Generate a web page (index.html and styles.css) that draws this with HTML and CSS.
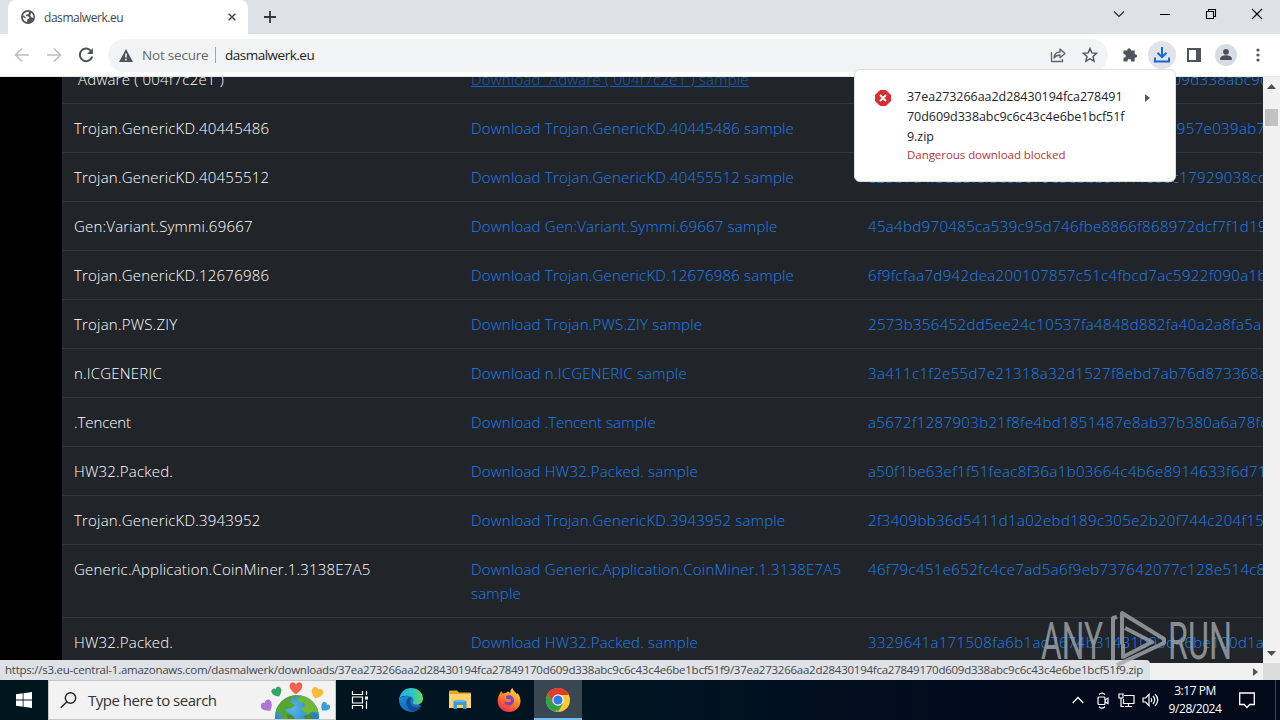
FILE: index.html
```html
<!DOCTYPE html>
<html lang="en">
<head>
<meta charset="utf-8">
<title>dasmalwerk.eu</title>
<link rel="stylesheet" href="styles.css">
</head>
<body>
<div class="screen">
  <header class="tabstrip">
    <div class="tab">
      <svg class="globe" width="14" height="14" viewBox="0 0 14 14"><circle cx="7" cy="7" r="7" fill="#505357"/><path d="M2 5.2C3 3 4.700 1.700 7.400 1.700L8.200 3 7 4.300 5.300 4.600 5 6 7.600 6.400 8.500 7.800 7.400 9 6.300 9.100 6.100 11.800 5.300 12C3 11 1.700 9 2 7L4.500 8.500 4.900 7.400ZM10 2.700C12 4 12.800 6 12.300 8L10.500 7.300 9.300 5.700Z" fill="#fff"/></svg>
      <span class="tab-title">dasmalwerk.eu</span>
      <svg class="tab-x" width="8" height="8" viewBox="0 0 8 8"><path d="M.7.7l6.600 6.600M7.300.7L.7 7.300" stroke="#45484c" stroke-width="1.500"/></svg>
    </div>
    <svg class="newtab" width="12" height="12" viewBox="0 0 12 12"><path d="M6 0v12M0 6h12" stroke="#35373b" stroke-width="1.800"/></svg>
    <div class="winbtns">
      <svg width="12" height="12" viewBox="0 0 12 12"><path d="M1 3.500l5 5 5-5" fill="none" stroke="#222" stroke-width="1.100"/></svg>
      <svg width="12" height="12" viewBox="0 0 12 12"><path d="M1 6.500h10" stroke="#000"/></svg>
      <svg width="12" height="12" viewBox="0 0 12 12"><path d="M1.500 3.500h7v7h-7zM3.500 3.500v-2h7v7h-2" fill="none" stroke="#000" stroke-width="1.100"/></svg>
      <svg width="12" height="12" viewBox="0 0 12 12"><path d="M1 1l10 10M11 1L1 11" stroke="#000" stroke-width="1.100"/></svg>
    </div>
  </header>
  <div class="toolbar">
    <div class="nav">
      <svg width="16" height="16" viewBox="0 0 16 16"><path d="M15 8H2M8 1.500L1.500 8 8 14.500" fill="none" stroke="#bcbec1" stroke-width="1.600"/></svg>
      <svg width="16" height="16" viewBox="0 0 16 16"><path d="M1 8h13M8 1.500L14.500 8 8 14.500" fill="none" stroke="#bcbec1" stroke-width="1.600"/></svg>
      <svg width="16" height="16" viewBox="0 0 16 16"><path d="M13.300 4.300A6.300 6.300 0 1 0 14.200 9.500" fill="none" stroke="#505357" stroke-width="2"/><path d="M14.900 1v6H9z" fill="#505357"/></svg>
    </div>
    <div class="omnibox">
      <svg width="14" height="13" viewBox="0 0 14 13"><path d="M7 0l7 13H0z" fill="#505357"/><path d="M7 4.500v4M7 9.800v1.600" stroke="#fff" stroke-width="1.500"/></svg>
      <span class="notsecure">Not secure</span><i class="sep"></i><span class="url">dasmalwerk.eu</span>
      <svg class="share" width="16" height="16" viewBox="0 0 16 16"><path d="M1.500 5v9.500h11v-2.500M4 11c.3-4 2.500-6 6-6V2l5 4.500-5 4.300V8C7.500 8 5.500 9 4 11z" fill="none" stroke="#606367" stroke-width="1.300" stroke-linejoin="round"/></svg>
      <svg width="16" height="16" viewBox="0 0 16 16"><path d="M8 1.500l1.900 4.400 4.700.4L11 9.500l1.100 4.700L8 11.700l-4.100 2.500L5 9.500 1.400 6.300l4.700-.4z" fill="none" stroke="#505357" stroke-width="1.400"/></svg>
    </div>
    <div class="actions">
      <span class="act"><svg width="16" height="16" viewBox="0 0 16 16"><path d="M1.500 3.500H5.300V3a1.800 1.800 0 0 1 3.600 0v.5h3.800v3.700h.6a1.800 1.800 0 0 1 0 3.600h-.6v3.700H9.200V14a1.900 1.900 0 0 0-3.800 0v.5H1.500v-3.700H2a1.800 1.800 0 0 0 0-3.600h-.5z" fill="#505357"/></svg></span>
      <span class="act active"><svg width="16" height="16" viewBox="0 0 16 16"><path d="M8 0v10M3.500 5.700L8 10.200l4.500-4.500M1 10.500v4h14v-4" fill="none" stroke="#1967d2" stroke-width="2"/></svg></span>
      <span class="act"><svg width="14" height="14" viewBox="0 0 14 14"><path d="M1 1h12v12H1z" fill="#fff" stroke="#505357" stroke-width="2"/><path d="M9 1h4v12H9z" fill="#505357"/></svg></span>
      <span class="act avatar"><svg width="22" height="22" viewBox="0 0 22 22"><circle cx="11" cy="11" r="11" fill="#dadce5"/><circle cx="11" cy="7.800" r="2.900" fill="#4a4e58"/><path d="M5.200 16v-1.500c0-2 3.500-3.200 5.800-3.200s5.800 1.200 5.800 3.200V16z" fill="#4a4e58"/></svg></span>
      <span class="act"><svg width="4" height="14" viewBox="0 0 4 14"><g fill="#505357"><circle cx="2" cy="2" r="1.600"/><circle cx="2" cy="7" r="1.600"/><circle cx="2" cy="12" r="1.600"/></g></svg></span>
    </div>
  </div>

  <div class="viewport">
    <div class="page">
      <div class="rows">
        <div class="row"><span>&nbsp;Adware ( 004f7c2e1 )</span><a class="hover">Download &nbsp;Adware ( 004f7c2e1 ) sample</a><a class="hash">37ea273266aa2d28430194fca27849170d609d338abc9c6c43</a></div>
        <div class="row"><span>Trojan.GenericKD.40445486</span><a>Download Trojan.GenericKD.40445486 sample</a><a class="hash">7a0d4c8e51b26f93ad0e7c15b8d24f60a3e1957e039ab7</a></div>
        <div class="row"><span>Trojan.GenericKD.40455512</span><a>Download Trojan.GenericKD.40455512 sample</a><a class="hash">e25b7d4f3d25fef5c63679e5e3b39ff7f4e60c17929038cd</a></div>
        <div class="row"><span>Gen:Variant.Symmi.69667</span><a>Download Gen:Variant.Symmi.69667 sample</a><a class="hash">45a4bd970485ca539c95d746fbe8866f868972dcf7f1d19</a></div>
        <div class="row"><span>Trojan.GenericKD.12676986</span><a>Download Trojan.GenericKD.12676986 sample</a><a class="hash">6f9fcfaa7d942dea200107857c51c4fbcd7ac5922f090a1b</a></div>
        <div class="row"><span>Trojan.PWS.ZIY</span><a>Download Trojan.PWS.ZIY sample</a><a class="hash">2573b356452dd5ee24c10537fa4848d882fa40a2a8fa5a1</a></div>
        <div class="row"><span>n.ICGENERIC</span><a>Download n.ICGENERIC sample</a><a class="hash">3a411c1f2e55d7e21318a32d1527f8ebd7ab76d873368a</a></div>
        <div class="row"><span class="tight">.Tencent</span><a>Download <span class="tight">.Tencent</span> sample</a><a class="hash">a5672f1287903b21f8fe4bd1851487e8ab37b380a6a78fc</a></div>
        <div class="row"><span>HW32.Packed.</span><a>Download HW32.Packed. sample</a><a class="hash">a50f1be63ef1f51feac8f36a1b03664c4b6e8914633f6d71</a></div>
        <div class="row"><span>Trojan.GenericKD.3943952</span><a>Download Trojan.GenericKD.3943952 sample</a><a class="hash">2f3409bb36d5411d1a02ebd189c305e2b20f744c204f15</a></div>
        <div class="row"><span>Generic.Application.CoinMiner.1.3138E7A5</span><a>Download Generic.Application.CoinMiner.1.3138E7A5<br>sample</a><a class="hash">46f79c451e652fc4ce7ad5a6f9eb737642077c128e514c8</a></div>
        <div class="row"><span>HW32.Packed.</span><a>Download HW32.Packed. sample</a><a class="hash">3329641a171508fa6b1ad7674b31431093d46be100d1a</a></div>
      </div>
    </div>
    <div class="vscroll"><svg width="9" height="5" viewBox="0 0 9 5"><path d="M4.500 0L9 5H0z" fill="#505050"/></svg><i class="thumb"></i><svg class="down" width="9" height="5" viewBox="0 0 9 5"><path d="M0 0h9L4.500 5z" fill="#505050"/></svg></div>
    <div class="hscroll"><svg width="5" height="8" viewBox="0 0 5 8"><path d="M0 0l5 4-5 4z" fill="#505050"/></svg></div>
    <div class="corner"></div>
    <div class="status">https://s3.eu-central-1.amazonaws.com/dasmalwerk/downloads/37ea273266aa2d28430194fca27849170d609d338abc9c6c43c4e6be1bcf51f9/37ea273266aa2d28430194fca27849170d609d338abc9c6c43c4e6be1bcf51f9.zip</div>
  </div>

  <footer class="taskbar">
    <div class="start"><svg width="16" height="16" viewBox="0 0 16 16"><path d="M0 2.200L6.700 1.300v6.300H0zM7.500 1.200L16 0v7.600H7.500zM0 8.400h6.700v6.300L0 13.800zM7.500 8.400H16V16l-8.500-1.200z" fill="#fff"/></svg></div>
    <div class="search">
      <svg width="17" height="17" viewBox="0 0 17 17"><circle cx="10.500" cy="6" r="5.200" fill="none" stroke="#222" stroke-width="1.400"/><path d="M6.700 10L.8 15.800" stroke="#222" stroke-width="1.500"/></svg>
      <span class="placeholder">Type here to search</span>
      <svg class="earth" width="74" height="38" viewBox="0 0 74 38">
        <defs><radialGradient id="sea" cx=".4" cy=".3"><stop offset="0" stop-color="#5ab5ea"/><stop offset="1" stop-color="#2583c4"/></radialGradient><clipPath id="ball"><circle cx="36" cy="36" r="22"/></clipPath>
        <path id="heart" d="M0 5C-8 0-5-5-2-4.500Q-.5-4.500 0-3Q.5-4.500 2-4.500C5-5 8 0 0 5z"/></defs>
        <circle cx="36" cy="36" r="22" fill="url(#sea)"/>
        <g clip-path="url(#ball)"><path d="M14 32C16 22 24 13 34 13l3 3-6 1-2 4 5 3-3 3-6 1-1 3 4 1 4 4v3H22l-2-7z" fill="#57a530"/><path d="M34 13c13-1 22 8 24 19l-8-1-3 3-4-3-3-4 4-2-1-4-4 1-3-4 4-2z" fill="#72b637"/><path d="M43 35l6-2 4 5h-9zM26 33l5 1 3 4h-7z" fill="#448e30"/></g>
        <use href="#heart" transform="translate(35 7) scale(1.250)" fill="#ef6350"/>
        <use href="#heart" transform="translate(16 11) rotate(-25)" fill="#31a466"/>
        <use href="#heart" transform="translate(56 12) rotate(20) scale(1.150)" fill="#f5bd35"/>
        <use href="#heart" transform="translate(6 25) rotate(-35) scale(1.150)" fill="#a978d2"/>
        <use href="#heart" transform="translate(64 26) rotate(40) scale(.9)" fill="#399bd8"/>
      </svg>
    </div>
    <div class="apps">
      <span class="app taskview"><svg width="18" height="18" viewBox="0 0 18 18"><path d="M1.500 0v3.500h10V0M1.500 18v-3.500h10V18M1.500 6h10v6h-10zM15.500 0v4M15.500 10v8" fill="none" stroke="#fff" stroke-width="1.200"/><path d="M14 5.500h3v3h-3z" fill="#fff"/></svg></span>
      <span class="app"><svg width="24" height="24" viewBox="0 0 24 24"><defs><linearGradient id="eg" x1="0" x2="1"><stop offset="0" stop-color="#29aee8"/><stop offset=".55" stop-color="#2cc5c3"/><stop offset="1" stop-color="#6bd95a"/></linearGradient><linearGradient id="eb" x1="0" y1="0" x2=".5" y2="1"><stop offset="0" stop-color="#1b8fd9"/><stop offset="1" stop-color="#1668b8"/></linearGradient></defs><path d="M.2 10A12 12 0 0 0 12 24c4 0 8-2 10.200-5.800L18 15 12 6z" fill="url(#eb)"/><path d="M.2 11C1 4.500 6 0 12 0c7 0 12 5 12 10.500 0 4-3 6-6 6-3 0-5-1-4-2.500 1.500-2 .5-5.500-4-6C6 7.500 2 8 .2 11z" fill="url(#eg)"/><path d="M9.500 9.500c-4.500 4-1.500 11.500 3.500 13.500 4 .5 7.500-1.800 9.200-4.800-5 2.500-11 .3-11-4.700 0-1.500 1.300-2 1.300-3 0-1.200-1.800-1.800-3-1z" fill="#124c94"/></svg></span>
      <span class="app"><svg width="22" height="20" viewBox="0 0 22 20"><path d="M0 1.500Q0 .5 1 .5h7l2 2h11q1 0 1 1V18H0z" fill="#e9a82d"/><path d="M0 4h22v14H0z" fill="#fcd46b"/><path d="M4.500 19v-8h13v8h-3.500v-4H8v4z" fill="#3f97d4"/><path d="M6 10h10v2H6z" fill="#68b5e6"/></svg></span>
      <span class="app"><svg width="24" height="24" viewBox="0 0 24 24"><defs><linearGradient id="ff" x1=".8" y1="0" x2=".2" y2="1"><stop offset="0" stop-color="#ffe247"/><stop offset=".45" stop-color="#ff8a20"/><stop offset="1" stop-color="#ee2351"/></linearGradient></defs><path d="M3 5.500L4 3l2 2.500 3-.8 2-1.200c1 1 2 1.200 2.500 1.200-.5-2 .5-3.700 2-4.700.5 3 3.500 4 4.500 6.500l.3-1.500C22.500 7 23.500 10 23.500 13 23.500 19 18.500 24 12 24S.7 19.300.7 13C.7 10 1.500 7.300 3 5.500z" fill="url(#ff)"/><path d="M9 8c3.500-2 8 0 8 4.500 0 3-2.300 5-5 5-2.500 0-4.500-1.500-5-4l4.500.8c2-.3 3-1.500 2.500-2.500L9 10.500z" fill="#7d42cc"/></svg></span>
      <span class="app current"><svg width="24" height="24" viewBox="0 0 24 24"><circle cx="12" cy="12" r="12" fill="#fcc934"/><path d="M1.600 6L7 15l5 3-2 5.800A12 12 0 0 1 1.600 6z" fill="#2da14c"/><path d="M12 24l5.200-9L12 17l-5-2z" fill="#2da14c"/><path d="M1.600 6L7 15l5-8h10.900A12 12 0 0 0 1.600 6z" fill="#e33b2e"/><circle cx="12" cy="12" r="5.700" fill="#fff"/><circle cx="12" cy="12" r="4.600" fill="#3478e6"/></svg></span>
    </div>
    <div class="tray">
      <svg width="12" height="8" viewBox="0 0 12 8"><path d="M.7 7L6 1.500 11.300 7" fill="none" stroke="#fff" stroke-width="1.300"/></svg>
      <svg class="cam" width="12" height="17" viewBox="0 0 12 17"><rect x="1" y="5" width="7" height="7.500" rx="1" fill="none" stroke="#fff" stroke-width="1.200"/><path d="M8 8l3-2v5.500L8 10M2 2.500Q5-.3 8 2.500M2 14.700Q5 17.500 8 14.700" fill="none" stroke="#fff" stroke-width="1.200"/></svg>
      <svg class="net" width="17" height="15" viewBox="0 0 17 15"><path d="M6 2.500h10v8H5.500V6M10.500 10.500v3M7 13.500h7M1 1h4v4H1zM3 5v8.500h3" fill="none" stroke="#fff" stroke-width="1.200"/></svg>
      <svg class="vol" width="17" height="14" viewBox="0 0 17 14"><path d="M1 5h2.500L7 1.500v11L3.500 9H1zM9 5q1.500 2 0 4M11 3q3.500 4 0 8M13 1q5.500 6 0 12" fill="none" stroke="#fff" stroke-width="1.200"/></svg>
      <div class="clock"><span>3:17 PM</span><span>9/28/2024</span></div>
      <svg class="note" width="16" height="17" viewBox="0 0 16 17"><path d="M.7 1h14.600v11.500h-4.500L8 15.500l-2.800-3H.7z" fill="none" stroke="#fff" stroke-width="1.300"/></svg>
      <i class="peek"></i>
    </div>
  </footer>

  <div class="bubble">
    <svg class="err" width="16" height="16" viewBox="0 0 16 16"><path d="M5 .5h6L15.500 5v6L11 15.500H5L.5 11V5z" fill="#d62f33" stroke="#d62f33" stroke-linejoin="round"/><path d="M5 5l6 6M11 5l-6 6" stroke="#fff" stroke-width="1.800"/></svg>
    <div class="dl"><p>37ea273266aa2d28430194fca278491</p><p>70d609d338abc9c6c43c4e6be1bcf51f</p><p>9.zip</p><p class="warn">Dangerous download blocked</p></div>
    <svg class="more" width="5" height="8" viewBox="0 0 5 8"><path d="M0 0l5 4-5 4z" fill="#55585c"/></svg>
  </div>

  <svg class="watermark" width="190" height="60" viewBox="0 0 190 60">
    <text class="wm" x="0" y="51" textLength="62" lengthAdjust="spacingAndGlyphs">ANY</text>
    <text class="wm" x="127" y="51" textLength="64" lengthAdjust="spacingAndGlyphs">RUN</text>
    <g fill="none" stroke="#a4a7aa" stroke-width="4" stroke-linejoin="round"><path d="M72 52V10l4-1M81 36V5l42 26v4L76 57M84 20l27 14-29 15V36"/></g>
  </svg>
</div>
</body>
</html>
```
FILE: styles.css
```css
* { box-sizing: border-box; }
body { margin: 0; background: #000; font-family: "Open Sans", "Noto Sans", sans-serif; }
svg { display: block; flex: none; }
p { margin: 0; }
.screen { position: relative; width: 1280px; height: 720px; overflow: hidden; display: flex; flex-direction: column; }

.tabstrip { height: 34px; flex: none; background: #dee1e6; display: flex; align-items: center; padding-left: 8px; }
.tab { width: 240px; height: 34px; background: #fff; border-radius: 8px 8px 0 0; display: flex; align-items: center; padding: 0 12px 0 13px; }
.tab-title { margin-left: 9px; font-size: 12px; color: #45484c; letter-spacing: -.45px; flex: 1; }
.newtab { margin-left: 16px; }
.winbtns { margin-left: auto; display: flex; gap: 34px; padding: 0 17px 6px 0; }

.toolbar { height: 43px; flex: none; background: #fff; display: flex; align-items: center; border-bottom: 1px solid #e4e7ea; }
.nav { display: flex; gap: 16px; padding-left: 14px; width: 108px; }
.omnibox { width: 1000px; height: 33px; border-radius: 17px; background: #f1f3f4; display: flex; align-items: center; padding: 0 10px 0 11px; }
.notsecure { margin-left: 9px; color: #65686c; font-size: 13.500px; letter-spacing: -.2px; width: 66px; white-space: nowrap; }
.sep { width: 1px; height: 16px; background: #a5a8ab; margin: 0 9px 0 7px; }
.url { color: #222427; font-size: 13.500px; letter-spacing: -.5px; }
.share { margin: 0 16px 0 auto; }
.actions { display: flex; align-items: center; padding-left: 6px; }
.act { width: 32px; height: 28px; display: flex; align-items: center; justify-content: center; }
.active { width: 28px; margin: 0 2px; border-radius: 50%; background: #e1e3e8; }

.viewport { position: relative; flex: none; height: 603px; display: grid; grid-template: 586px 17px / 1263px 17px; background: #000; }
.page { overflow: hidden; padding-left: 62px; }
.rows { background: #212529; margin-top: -23px; }
.row { display: grid; grid-template-columns: 397px 397px 1fr; border-top: 1px solid #32383e; font-size: 15px; font-weight: 350; line-height: 24px; letter-spacing: .2px; color: #fff; white-space: nowrap; }
.row > * { padding: 12px 0 12px 12px; overflow: hidden; }
.row a { color: #1c80f2; }
.row .hash { letter-spacing: .35px; }
.row .tight { letter-spacing: -.1px; }
.row .hover { text-decoration: underline; color: #1161bd; }
.vscroll { background: #f1f1f1; display: flex; flex-direction: column; align-items: center; padding: 7px 0; }
.thumb { width: 13px; height: 17px; margin-top: 20px; background: #c1c1c1; }
.down { margin-top: auto; }
.hscroll { background: #f1f1f1; display: flex; align-items: center; justify-content: flex-end; padding-right: 5px; }
.corner { background: #dcdcdc; }
.status { position: absolute; left: 0; bottom: 0; width: 1150px; height: 20px; background: #dee1e6; border-top-right-radius: 4px; padding-left: 5px; font-size: 11.500px; letter-spacing: -.25px; line-height: 20px; color: #45484c; white-space: nowrap; overflow: hidden; }

.taskbar { height: 40px; flex: none; background: linear-gradient(90deg, #00151e, #001422 50%, #020a1c 80%, #020a1a); display: flex; }
.start { width: 48px; display: flex; align-items: center; justify-content: center; }
.search { width: 288px; background: #f2f2f2; border: 1px solid #c4c6c8; display: flex; align-items: center; padding-left: 11px; color: #333; font-size: 15px; }
.placeholder { margin-left: 11px; letter-spacing: -.5px; }
.earth { margin-left: auto; }
.apps { display: flex; }
.app { width: 49px; display: flex; align-items: center; justify-content: center; }
.taskview { width: 47px; margin-right: 3px; }
.current { width: 48px; margin-left: 1px; padding-top: 2px; background: #384752; border-bottom: 2px solid #76b9ed; }
.tray { margin-left: auto; display: flex; align-items: center; padding-right: 4px; color: #fff; }
.cam { margin-left: 13px; }
.net { margin-left: 9px; }
.vol { margin-left: 7px; }
.clock { width: 72px; margin: 0 8px 0 0; display: flex; flex-direction: column; align-items: center; font-size: 12px; line-height: 18px; letter-spacing: -.45px; }
.peek { width: 1px; height: 40px; margin-left: 20px; background: #3c4352; }

.bubble { position: absolute; left: 854px; top: 69px; width: 322px; height: 113px; background: #fff; border: 1px solid #dcdee1; border-radius: 6px; display: flex; padding: 17px 0 0 20px; font-size: 12.500px; line-height: 20px; color: #222427; }
.err { margin-top: 3px; }
.dl { margin-left: 16px; width: 238px; white-space: nowrap; letter-spacing: -.05px; }
.dl .warn { font-size: 11.500px; line-height: 16px; color: #b93434; }
.more { margin-top: 7px; }
.watermark { position: absolute; left: 1041px; top: 608px; opacity: .8; overflow: visible; }
.wm { font: 400 51px "Roboto", sans-serif; fill: #a4a7aa; }
```
